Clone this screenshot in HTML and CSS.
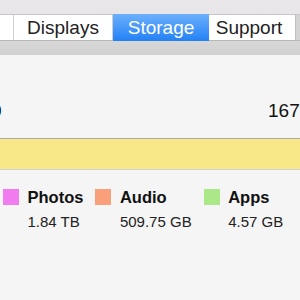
FILE: index.html
```html
<!DOCTYPE html>
<html lang="en">
<head>
    <meta charset="UTF-8">
    <meta name="viewport" content="width=device-width, initial-scale=1.0">
    <title>Storage</title>
    <link rel="stylesheet" href="styles.css">
</head>
<body>

    <div class="toolbar"></div>
    <div class="tabs">
        <div class="tab tab-first"></div>
        <div class="tab tab-displays">Displays</div>
        <div class="tab tab-storage active">Storage</div>
        <div class="tab tab-support">Support</div>
    </div>
    <div class="band"></div>

    <div class="content">
        <div class="totals">
            <span class="total-left">0</span>
            <span class="total-right">167.79 GB available</span>
        </div>
        <div class="usage-bar"></div>

        <div class="legend">
            <div class="legend-item">
                <span class="swatch photos"></span>
                <span class="legend-label">Photos</span>
                <span class="legend-value">1.84 TB</span>
            </div>
            <div class="legend-item">
                <span class="swatch audio"></span>
                <span class="legend-label">Audio</span>
                <span class="legend-value">509.75 GB</span>
            </div>
            <div class="legend-item">
                <span class="swatch apps"></span>
                <span class="legend-label">Apps</span>
                <span class="legend-value">4.57 GB</span>
            </div>
        </div>
    </div>

</body>
</html>
```

FILE: styles.css
```css
html, body {
    margin: 0;
    padding: 0;
    width: 300px;
    height: 300px;
    overflow: hidden;
}
body {
    font-family: "Liberation Sans", Arial, sans-serif;
    background-color: #f5f5f5;
    color: #111;
}
.toolbar {
    height: 14px;
    background-color: #e8e6e8;
}
.tabs {
    display: flex;
    height: 25px;
    background-color: #d4d4d4;
    border-top: 1px solid #c6c6c6;
    border-bottom: 1px solid #b8b8b8;
}
.tab {
    background-color: #fff;
    font-size: 19px;
    line-height: 25px;
    color: #222;
    text-align: center;
    box-sizing: border-box;
    border-right: 1px solid #d0d0d0;
    white-space: nowrap;
}
.tab-first {
    width: 14px;
}
.tab-displays {
    width: 99px;
}
.tab-storage {
    width: 96px;
}
.tab-support {
    width: 87px;
    padding-right: 6px;
    border-right: 1px solid #c0c0c0;
}
.tab.active {
    color: #fff;
    background: linear-gradient(#6cb0fb, #2381f6);
    border-right: none;
    margin-top: -1px;
    margin-bottom: -1px;
    line-height: 27px;
}
.band {
    height: 14px;
    background: linear-gradient(#d7d7d7, #d0d0d0);
}
.content {
    padding-top: 45px;
}
.totals {
    display: flex;
    font-size: 19px;
    line-height: 22px;
    color: #111;
    white-space: nowrap;
}
.total-left {
    margin-left: -9px;
}
.total-right {
    margin-left: auto;
    width: 32px;
}
.usage-bar {
    margin-top: 16px;
    height: 30px;
    background-color: #f9e887;
    border-top: 1px solid #a8a8a8;
    border-bottom: 1px solid #d2d2d2;
}
.legend {
    display: flex;
    gap: 12px;
    padding-left: 3px;
    margin-top: 19px;
}
.legend-item {
    display: grid;
    grid-template-columns: 16px auto;
    column-gap: 8.5px;
}
.swatch {
    width: 16px;
    height: 16px;
}
.swatch.photos {
    background-color: #f07cf0;
}
.swatch.audio {
    background-color: #f9a07b;
}
.swatch.apps {
    background-color: #abe888;
}
.legend-label {
    font-size: 16.5px;
    font-weight: bold;
    line-height: 16px;
    color: #111;
}
.legend-value {
    grid-column: 2;
    margin-top: 8px;
    font-size: 15px;
    line-height: 18px;
    color: #222;
}
```
